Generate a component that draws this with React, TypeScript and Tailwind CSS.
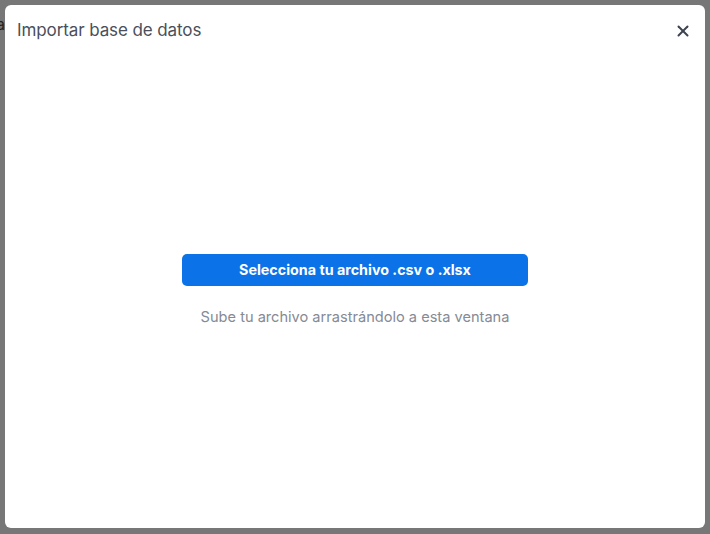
import React from "react";

export default function App() {
  return (
    <div className="relative w-[710px] h-[534px] overflow-hidden bg-[#777777] font-['Inter',sans-serif]">
      {/* page behind the overlay */}
      <span className="absolute left-[-4px] top-[12px] text-[16px] text-[#222]">a</span>

      <div className="absolute left-[5px] top-[5px] w-[700px] h-[523px] bg-white rounded-md flex flex-col">
        <div className="h-[48px] flex items-center justify-between pl-[12px] pr-[15px] pt-[4px]">
          <h2 className="text-[17px] text-[#4a4f5b] tracking-[-0.1px]">Importar base de datos</h2>
          <button className="w-[14px] h-[14px] flex items-center justify-center text-[#3e4350]">
            <svg viewBox="0 0 12 12" className="w-[12px] h-[12px]" fill="none" stroke="currentColor" strokeWidth="2" strokeLinecap="round">
              <line x1="1.5" y1="1.5" x2="10.5" y2="10.5" />
              <line x1="10.5" y1="1.5" x2="1.5" y2="10.5" />
            </svg>
          </button>
        </div>

        <div className="flex-1 flex flex-col items-center justify-center">
          <button className="w-[346px] h-[32px] rounded-[5px] bg-[#0b72e8] text-white text-[14.3px] font-bold">
            Selecciona tu archivo .csv o .xlsx
          </button>
          <p className="mt-[21px] text-[14.6px] leading-5 text-[#858a94]">
            Sube tu archivo arrastrándolo a esta ventana
          </p>
        </div>
      </div>
    </div>
  );
}
